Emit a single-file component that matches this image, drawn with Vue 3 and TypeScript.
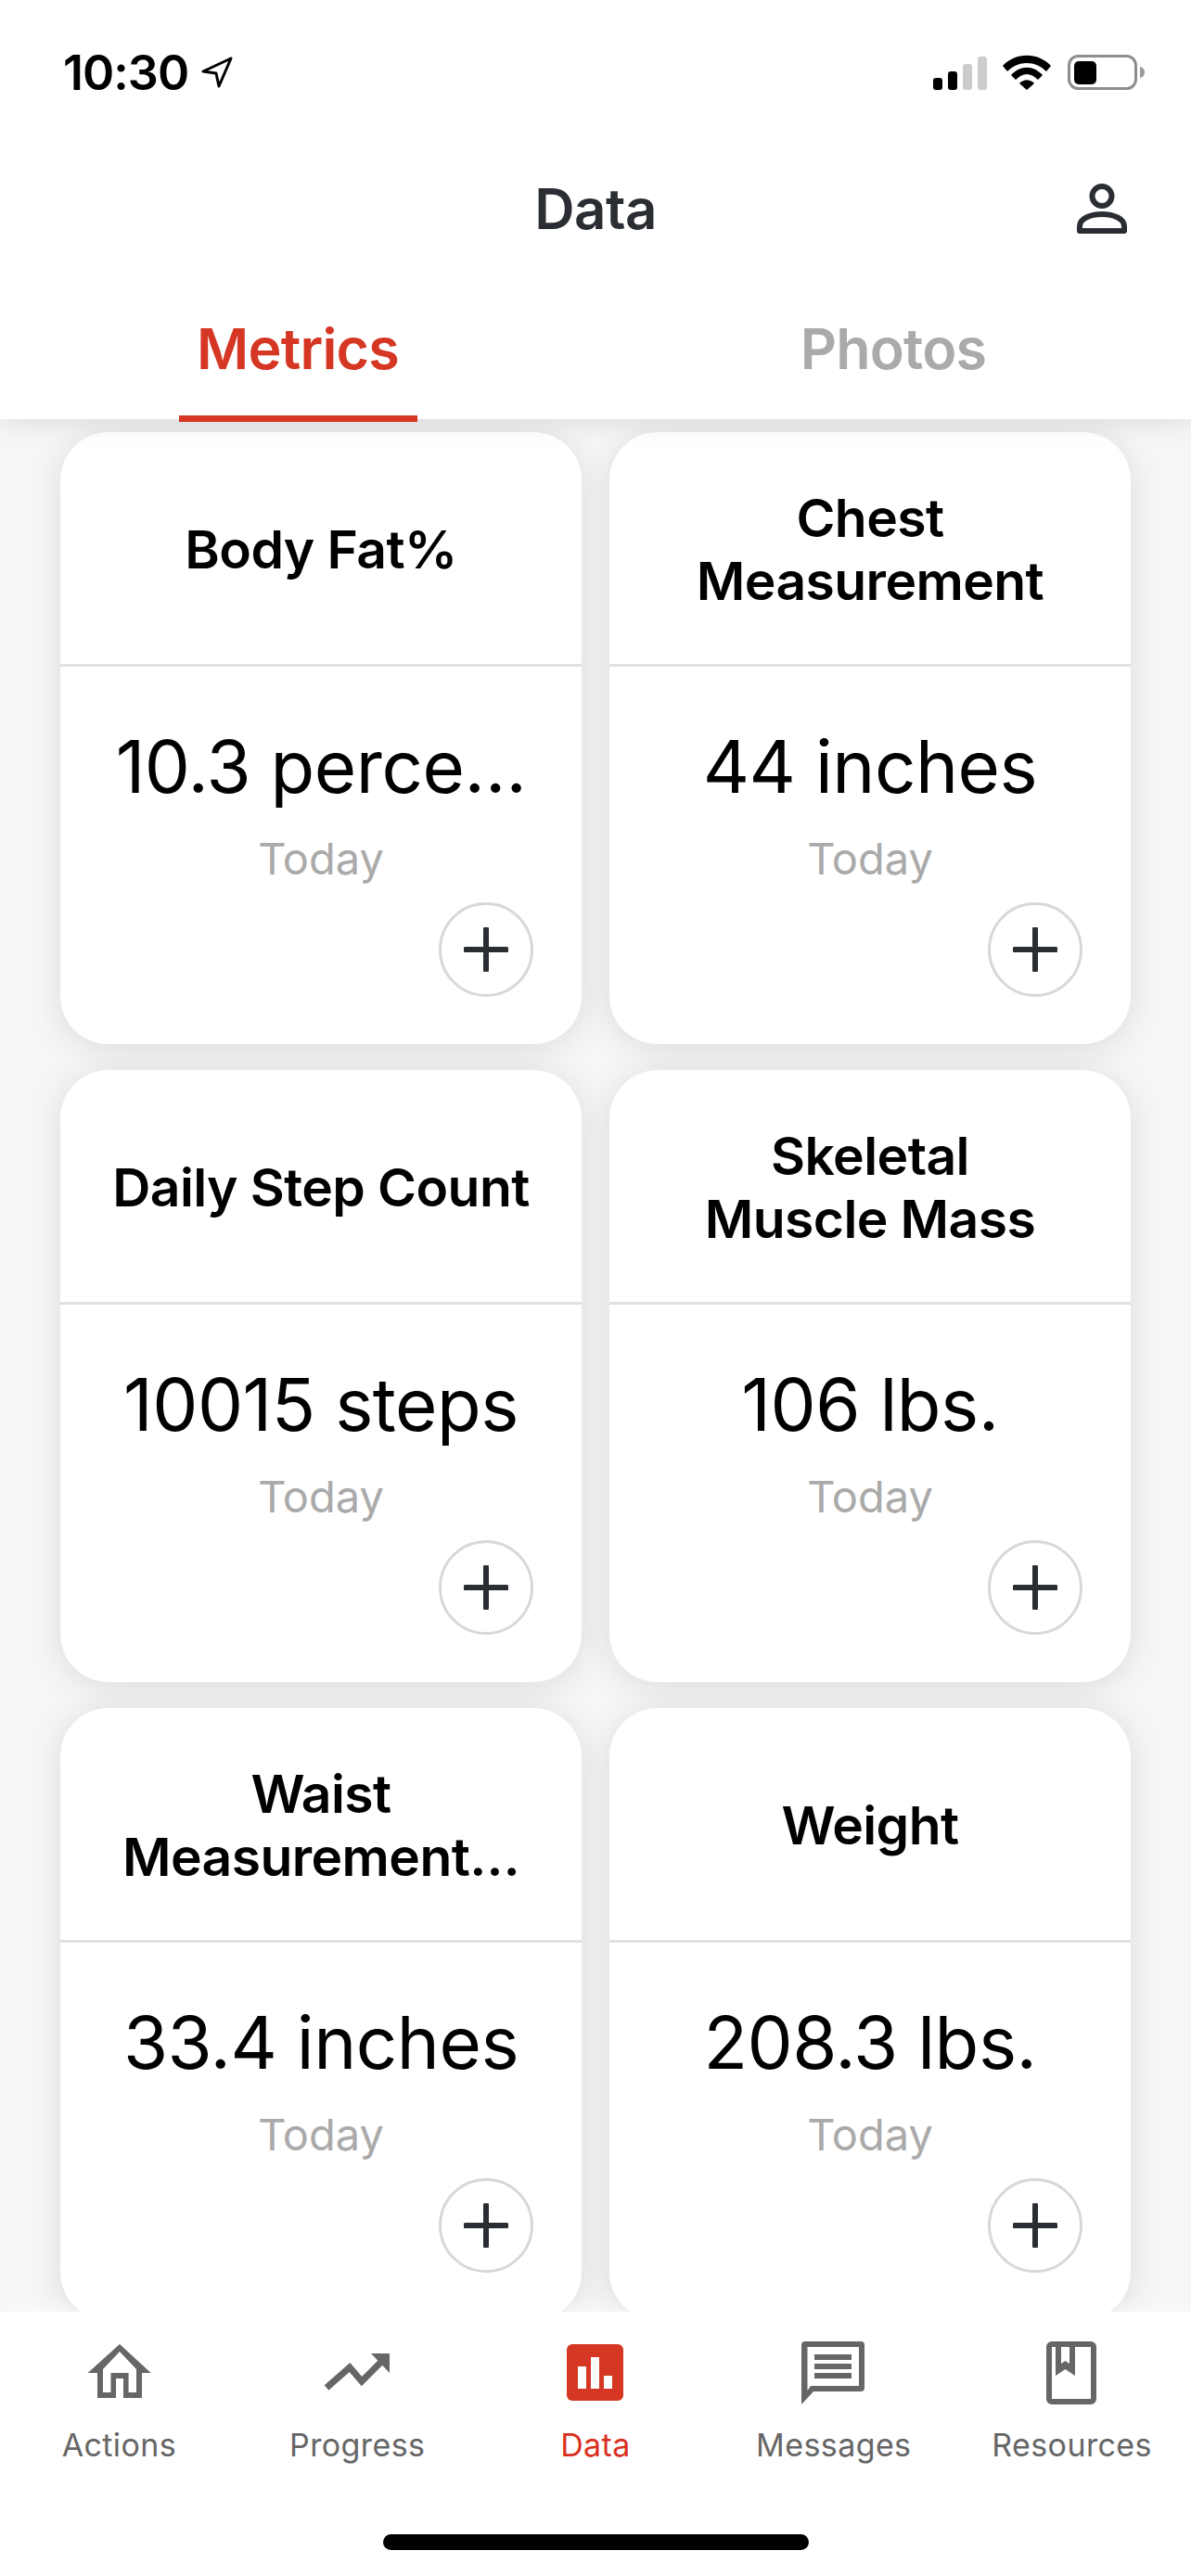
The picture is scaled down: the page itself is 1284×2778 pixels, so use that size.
<script setup lang="ts">
import { ref } from 'vue'

interface Metric {
  title: string[]
  value: string
}

const metrics: Metric[] = [
  { title: ['Body Fat%'], value: '10.3 perce…' },
  { title: ['Chest', 'Measurement'], value: '44 inches' },
  { title: ['Daily Step Count'], value: '10015 steps' },
  { title: ['Skeletal', 'Muscle Mass'], value: '106 lbs.' },
  { title: ['Waist', 'Measurement…'], value: '33.4 inches' },
  { title: ['Weight'], value: '208.3 lbs.' },
]

const navItems = ['Actions', 'Progress', 'Data', 'Messages', 'Resources']
const activeTab = ref('Metrics')
const tabs = ['Metrics', 'Photos']
</script>

<template>
  <div class="screen">
    <div class="top">
      <div class="status">
        <div class="time">
          <span>10:30</span>
          <svg width="34" height="34" viewBox="0 0 34 34">
            <path d="M32 2 L2 16 L16 18 L19 32 Z" fill="none" stroke="#000" stroke-width="3" stroke-linejoin="round" />
          </svg>
        </div>
        <div class="status-icons">
          <svg class="signal" width="60" height="38" viewBox="0 0 60 38">
            <rect x="1" y="25" width="10" height="13" rx="3" fill="#000" />
            <rect x="17" y="18" width="10" height="20" rx="3" fill="#000" />
            <rect x="33" y="10" width="10" height="28" rx="3" fill="#ccc" />
            <rect x="49" y="2" width="10" height="36" rx="3" fill="#ccc" />
          </svg>
          <svg class="wifi" width="52" height="38" viewBox="0 0 52 38">
            <path d="M0 12 C14 -3 38 -3 52 12 L47 18 C35 6 17 6 5 18 Z" fill="#000" />
            <path d="M9 22 C19 11 33 11 43 22 L38 27 C30 19 22 19 14 27 Z" fill="#000" />
            <path d="M18 31 C23 26 29 26 34 31 L26 38 Z" fill="#000" />
          </svg>
          <svg width="84" height="38" viewBox="0 0 84 38">
            <rect x="1.5" y="1.5" width="72" height="35" rx="10" fill="none" stroke="#8e8e8e" stroke-width="3" />
            <rect x="7" y="7" width="24" height="25" rx="5" fill="#000" />
            <path d="M78 13 C82 14 83 17 83 19 C83 21 82 24 78 25 Z" fill="#9a9a9a" />
          </svg>
        </div>
      </div>

      <div class="header">
        <div class="title">Data</div>
        <svg class="person" width="54" height="54" viewBox="0 0 54 54">
          <circle cx="27" cy="13.5" r="10.5" fill="none" stroke="#2a2e33" stroke-width="6" />
          <path d="M3 51 V46 C3 38 14 33 27 33 C40 33 51 38 51 46 V51 Z" fill="none" stroke="#2a2e33" stroke-width="6" stroke-linejoin="round" />
        </svg>
      </div>

      <div class="tabs">
        <div v-for="t in tabs" :key="t" :class="['tab', { active: t === activeTab }]">
          <span>{{ t }}</span>
          <i v-if="t === activeTab" class="underline"></i>
        </div>
      </div>
    </div>

    <div class="content">
      <div class="grid">
        <div v-for="m in metrics" :key="m.value" class="card">
          <div class="card-head">
            <div v-for="line in m.title" :key="line">{{ line }}</div>
          </div>
          <div class="card-body">
            <div class="value">{{ m.value }}</div>
            <div class="date">Today</div>
            <div class="add">
              <svg width="48" height="48" viewBox="0 0 48 48">
                <path d="M24 2 V46 M2 24 H46" stroke="#2a2e33" stroke-width="6" stroke-linecap="round" />
              </svg>
            </div>
          </div>
        </div>
      </div>
    </div>

    <div class="nav">
      <div class="nav-row">
        <div v-for="n in navItems" :key="n" :class="['nav-item', { on: n === 'Data' }]">
          <svg width="80" height="72" viewBox="0 0 80 72">
            <path
              v-if="n === 'Actions'"
              fill-rule="evenodd"
              fill="#666"
              d="M41 6 L74.7 37 H65 V64 H45 V43 H37 V64 H17 V37 H6.6 Z M41 14 L23 33 V58 H31.5 V37 H50.6 V58 H59 V33 Z"
            />
            <g v-else-if="n === 'Progress'" fill="#666">
              <path d="M7 53 L32 31 L45 46 L66 25" fill="none" stroke="#666" stroke-width="7" />
              <path d="M75 16 H55 L75 37 Z" />
            </g>
            <g v-else-if="n === 'Data'">
              <rect x="9" y="6" width="61" height="61" rx="6" fill="#d53724" />
              <rect x="21" y="30" width="9" height="24" fill="#fff" />
              <rect x="35" y="20" width="9" height="34" fill="#fff" />
              <rect x="49" y="40" width="9" height="14" fill="#fff" />
            </g>
            <g v-else-if="n === 'Messages'" fill="#666">
              <path
                fill-rule="evenodd"
                d="M5 71 V7 a4 4 0 0 1 4 -4 H69 a4 4 0 0 1 4 4 V53 a4 4 0 0 1 -4 4 H18 Z M11.5 9 V56 L15 51 H67 V9 Z"
              />
              <rect x="19" y="17" width="40" height="6" />
              <rect x="19" y="27" width="40" height="6" />
              <rect x="19" y="37" width="40" height="6" />
            </g>
            <g v-else fill="#666">
              <path
                fill-rule="evenodd"
                d="M18 3 H60 a6 6 0 0 1 6 6 V65 a6 6 0 0 1 -6 6 H18 a6 6 0 0 1 -6 -6 V9 a6 6 0 0 1 6 -6 Z M18 9 V65 H60 V9 H43 V40 L32.5 33 L22 40 V9 Z M28 9 V27 L32.5 24 L37 27 V9 Z"
              />
            </g>
          </svg>
          <span>{{ n }}</span>
        </div>
      </div>
      <div class="home-bar"></div>
    </div>
  </div>
</template>

<style>
html,
body {
  margin: 0;
  background: #fff;
}
</style>

<style scoped>
.screen {
  width: 1284px;
  height: 2778px;
  display: flex;
  flex-direction: column;
  overflow: hidden;
  font-family: Inter, 'Liberation Sans', sans-serif;
  background: #f6f6f6;
}
.top {
  background: #fff;
  height: 452px;
  flex: none;
  position: relative;
  z-index: 2;
  box-shadow: 0 4px 26px rgba(0, 0, 0, 0.1);
}
.status {
  height: 130px;
  box-sizing: border-box;
  padding: 59px 49px 0 68px;
  display: flex;
  justify-content: space-between;
  align-items: flex-start;
}
.time {
  display: flex;
  align-items: center;
  gap: 14px;
  height: 38px;
  font-size: 52px;
  font-weight: 600;
  letter-spacing: -1px;
  color: #000;
}
.status-icons {
  display: flex;
  gap: 16px;
}
.status-icons .wifi {
  margin-right: 2px;
}
.header {
  height: 190px;
  display: flex;
  align-items: center;
  justify-content: center;
  position: relative;
}
.title {
  font-size: 60px;
  font-weight: 600;
  color: #2a2e33;
  letter-spacing: -0.5px;
}
.person {
  position: absolute;
  right: 69px;
  top: 68px;
}
.tabs {
  display: flex;
  height: 132px;
}
.tab {
  flex: 1;
  position: relative;
  display: flex;
  justify-content: center;
  padding-top: 31px;
  font-size: 61px;
  font-weight: 600;
  letter-spacing: -0.8px;
  color: #aaa;
  line-height: 50px;
}
.tab.active {
  color: #d53724;
}
.underline {
  position: absolute;
  left: 193px;
  width: 257px;
  height: 7px;
  bottom: -3px;
  background: #d53724;
}
.content {
  flex: 1;
  min-height: 0;
  overflow: hidden;
}
.grid {
  display: grid;
  grid-template-columns: 562px 562px;
  justify-content: space-between;
  padding: 14px 65px 0;
  row-gap: 28px;
}
.card {
  height: 660px;
  background: #fff;
  border-radius: 52px;
  box-shadow: 0 4px 36px rgba(0, 0, 0, 0.11);
  display: flex;
  flex-direction: column;
}
.card-head {
  height: 253px;
  flex: none;
  box-sizing: border-box;
  padding-top: 4px;
  border-bottom: 3px solid #e0e0e0;
  display: flex;
  flex-direction: column;
  align-items: center;
  justify-content: center;
  font-size: 57px;
  line-height: 68px;
  font-weight: 600;
  letter-spacing: -0.6px;
  color: #000;
}
.card-body {
  flex: 1;
  display: flex;
  flex-direction: column;
  align-items: center;
  padding-top: 60px;
  position: relative;
}
.value {
  font-size: 78px;
  line-height: 96px;
  font-weight: 400;
  letter-spacing: -0.5px;
  color: #000;
}
.date {
  margin-top: 23px;
  font-size: 47px;
  line-height: 56px;
  color: #aaa;
}
.add {
  position: absolute;
  right: 52px;
  bottom: 51px;
  width: 102px;
  height: 102px;
  box-sizing: border-box;
  border: 3px solid #d8d8d8;
  border-radius: 50%;
  display: flex;
  align-items: center;
  justify-content: center;
}
.nav {
  height: 285px;
  flex: none;
  background: #fff;
  position: relative;
  z-index: 2;
  box-shadow: 0 -6px 20px rgba(255, 255, 255, 0.5);
}
.nav-row {
  display: grid;
  grid-template-columns: repeat(5, 1fr);
  padding-top: 29px;
}
.nav-item {
  display: flex;
  flex-direction: column;
  align-items: center;
  font-size: 34px;
  line-height: 42px;
  letter-spacing: 0.4px;
  color: #666;
}
.nav-item span {
  margin-top: 22px;
}
.nav-item.on span {
  color: #d9301f;
}
.home-bar {
  position: absolute;
  left: 413px;
  top: 240px;
  width: 459px;
  height: 17px;
  border-radius: 9px;
  background: #000;
}
</style>
